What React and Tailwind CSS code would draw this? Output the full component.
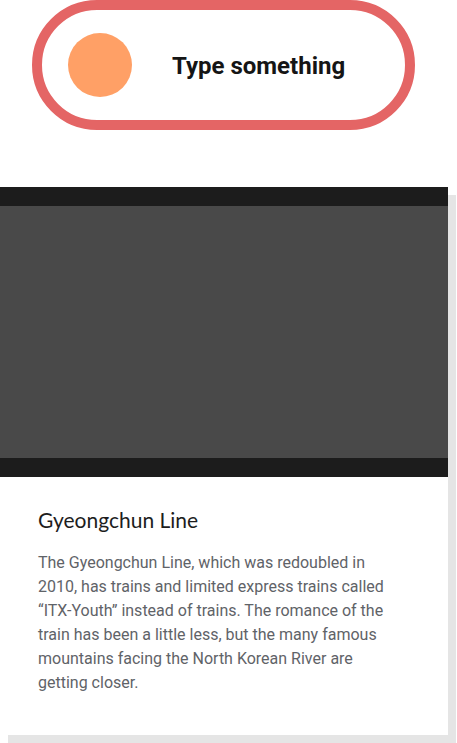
import React from "react";

function App() {
  return (
    <div className="w-[457px] h-[743px] bg-white overflow-hidden" style={{ fontFamily: "Roboto, sans-serif" }}>
      {/* Pill input */}
      <div className="ml-[32px] w-[383px] h-[130px] rounded-full border-[10px] border-[#e46565] flex items-center">
        <div className="ml-[26px] w-[64px] h-[64px] rounded-full bg-[#ffa066]" />
        <span className="ml-[40px] mt-[2px] text-[24px] font-bold text-[#151515]">Type something</span>
      </div>

      {/* Card */}
      <div className="mt-[57px] w-[448px] bg-white shadow-[8px_8px_0_0_#e5e5e5]">
        <div className="bg-[#1c1c1c] py-[19px]">
          <div className="h-[252px] bg-[#494949]" />
        </div>
        <div className="pl-[38px] pt-[29px] pb-[40px]">
          <h2 className="text-[21px] text-[#1d1d1d] leading-[28px]" style={{ fontFamily: "Lato, sans-serif" }}>Gyeongchun Line</h2>
          <p className="mt-[17px] w-[360px] text-[16px] leading-[24px] text-[#5f6368]">
            The Gyeongchun Line, which was redoubled in 2010, has trains and limited express trains called “ITX-Youth” instead of trains. The romance of the train has been a little less, but the many famous mountains facing the North Korean River are getting closer.
          </p>
        </div>
      </div>
    </div>
  );
}

export default App;
